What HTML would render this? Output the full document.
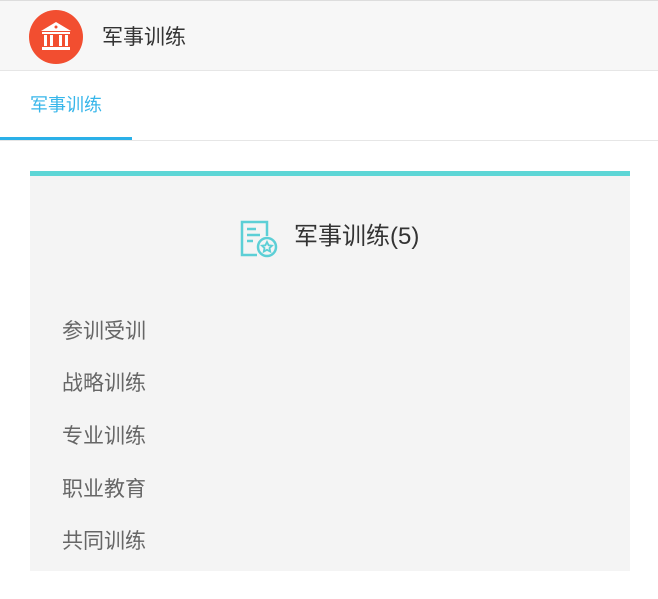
<!DOCTYPE html>
<html><head><meta charset="utf-8"><style>
*{margin:0;padding:0;box-sizing:border-box}
body{width:658px;height:599px;background:#fff;font-family:"Liberation Sans","Noto Sans CJK SC",sans-serif;position:relative;overflow:hidden}
.hd{position:absolute;left:0;top:0;width:658px;height:71px;background:#f7f7f7;border-top:1px solid #ddd;border-bottom:1px solid #e6e6e6}
.logo{position:absolute;left:29px;top:9px;width:54px;height:54px;border-radius:50%;background:#f24e30}
.ht{position:absolute;left:102px;top:23px;font-size:21px;color:#333;line-height:28px}
.tab{position:absolute;left:30px;top:93px;font-size:18px;color:#37b6ea;line-height:24px}
.ul{position:absolute;left:0;top:137px;width:132px;height:3px;background:#2ab0e8}
.tb{position:absolute;left:0;top:140px;width:658px;height:1px;background:#e6e6e6}
.card{position:absolute;left:30px;top:171px;width:600px;height:400px;background:#f4f4f4;border-top:5px solid #5dd6d6}
.ct{position:absolute;left:264px;top:46px;font-size:24px;color:#333;line-height:30px}
.it{position:absolute;left:32px;font-size:21px;color:#666;line-height:26px}
</style></head><body>
<div class="hd">
<div class="logo"><svg width="54" height="54" viewBox="0 0 54 54">
<polygon points="27,12 12,21 42,21" fill="#fff"/><circle cx="27" cy="17" r="1.5" fill="#f24e30"/>
<rect x="13" y="22" width="28" height="2" fill="#fff"/>
<rect x="15" y="25" width="3" height="11" fill="#fff"/><rect x="21" y="25" width="3" height="11" fill="#fff"/>
<rect x="30" y="25" width="3" height="11" fill="#fff"/><rect x="36" y="25" width="3" height="11" fill="#fff"/>
<rect x="13" y="37" width="28" height="3" fill="#fff"/></svg></div>
<div class="ht">军事训练</div>
</div>
<div class="tab">军事训练</div>
<div class="ul"></div><div class="tb"></div>
<div class="card">
<svg style="position:absolute;left:209px;top:43px" width="42" height="42" viewBox="0 0 42 42" fill="none" stroke="#5ccfd6" stroke-width="2.5">
<path d="M18 36H3V3h25v14"/><path d="M8 10h9M8 16h13M8 22h6"/>
<circle cx="28" cy="28" r="9"/><path d="M28 23l1.6 3.3 3.4.4-2.5 2.4.7 3.4-3.2-1.7-3.2 1.7.7-3.4-2.5-2.4 3.4-.4z" stroke-width="1.8"/></svg>
<div class="ct">军事训练(5)</div>
<div class="it" style="top:143px">参训受训</div>
<div class="it" style="top:195px">战略训练</div>
<div class="it" style="top:248px">专业训练</div>
<div class="it" style="top:301px">职业教育</div>
<div class="it" style="top:353px">共同训练</div>
</div>
</body></html>
